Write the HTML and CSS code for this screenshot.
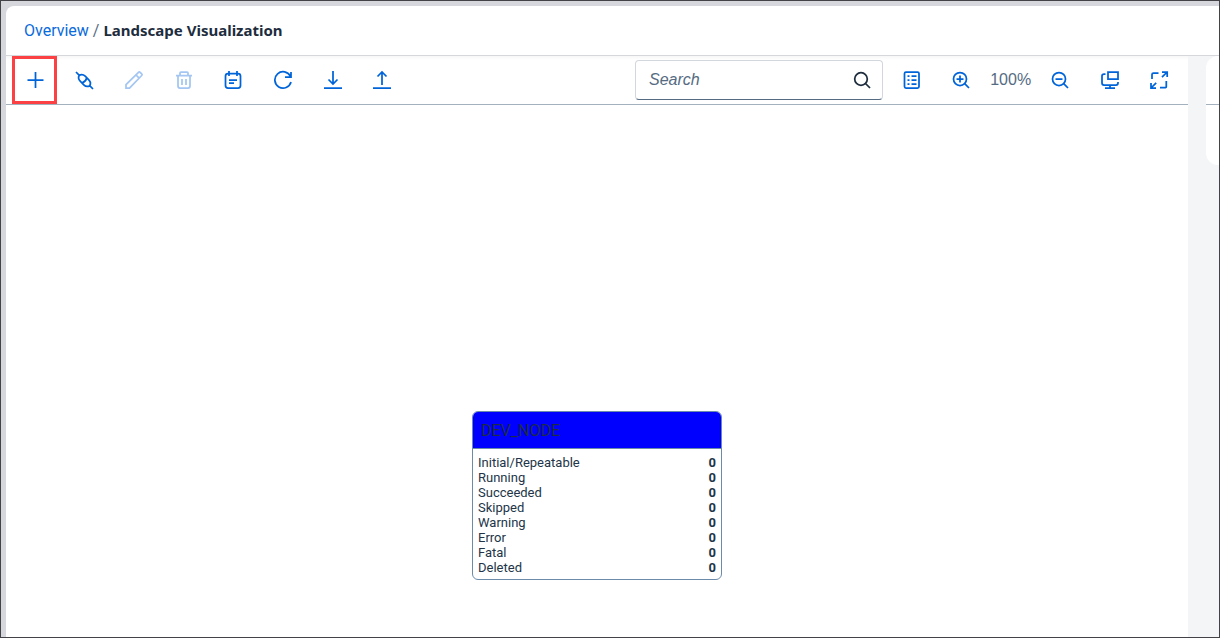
FILE: index.html
```html
<!DOCTYPE html>
<html lang="en">
<head>
<meta charset="utf-8">
<meta name="viewport" content="width=device-width, initial-scale=1">
<title>Landscape Visualization</title>
<link rel="stylesheet" href="styles.css">
</head>
<body>
<div class="shell">
  <header class="header">
    <nav class="breadcrumb" aria-label="Breadcrumb">
      <a class="crumb" href="#">Overview</a>
      <span class="separator">/</span>
      <h1 class="title">Landscape Visualization</h1>
    </nav>
  </header>
  <div class="content">
    <main class="graph">
      <div class="toolbar" role="toolbar" aria-label="Landscape">
        <div class="tools tools-edit">
          <button class="tool highlighted" type="button" aria-label="Add node"><svg class="icon" viewBox="0 0 20 20"><path d="M10.500 2v16M2.500 10h16"/></svg></button>
          <button class="tool" type="button" aria-label="Connect"><svg class="icon" viewBox="0 0 20 20"><path d="M2 2l3.300 3.300M15.700 15.700l3.300 3.300M5.300 5.300C7.500 4 9.500 4.500 11.200 6.200l3.600 3.600C16.500 11.500 17 13.500 15.700 15.700C13.500 17 11.500 16.500 9.800 14.800L6.200 11.200C4.500 9.500 4 7.500 5.300 5.300ZM12.800 7.800Q12 11.500 8.200 12.800"/></svg></button>
          <button class="tool" type="button" aria-label="Edit" disabled><svg class="icon" viewBox="0 0 20 20"><path d="M2 18v-3.500L14.500 2.300q.8-.8 1.600 0l1.600 1.600q.8.800 0 1.600L5.500 18ZM12 5l3.200 3.200"/></svg></button>
          <button class="tool" type="button" aria-label="Delete" disabled><svg class="icon" viewBox="0 0 20 20"><path d="M2 5.500h16M6 5V3q0-1 1-1h6q1 0 1 1v2M4 6v10q0 2 2 2h8q2 0 2-2V6M8 9v6M12 9v6"/></svg></button>
          <button class="tool" type="button" aria-label="Schedule"><svg class="icon" viewBox="0 0 20 20"><path d="M5 3.500h10q2.500 0 2.500 2.500v9.500q0 2.500-2.500 2.500H5q-2.500 0-2.500-2.500V6Q2.500 3.500 5 3.500ZM6 1v5M14 1v5M6 10.200h8M6 13.200h5"/></svg></button>
          <button class="tool" type="button" aria-label="Refresh"><svg class="icon" viewBox="0 0 20 20"><path d="M18 12A8.200 8.200 0 1 1 17.500 6.500M18 2v5h-6"/></svg></button>
          <button class="tool" type="button" aria-label="Download"><svg class="icon" viewBox="0 0 20 20"><path d="M10 1v13M5.500 9.500 10 14l4.500-4.500M1 18.200h18"/></svg></button>
          <button class="tool" type="button" aria-label="Upload"><svg class="icon" viewBox="0 0 20 20"><path d="M10 15V2M5.500 6.500 10 2l4.500 4.500M1 18.200h18"/></svg></button>
        </div>
        <form class="search" role="search">
          <input class="search-input" type="text" placeholder="Search" aria-label="Search">
          <button class="search-button" type="button" aria-label="Search"><svg class="icon" viewBox="0 0 20 20"><circle cx="9" cy="9" r="6.300"/><path d="m13.500 13.500 4.500 4.500"/></svg></button>
        </form>
        <div class="tools tools-view">
          <button class="tool" type="button" aria-label="Legend"><svg class="icon" viewBox="0 0 20 20"><rect x="2.500" y="2" width="14.500" height="16" rx="1.500"/><path d="M5.500 6h2M5.500 10h2M5.500 14h2M9.500 6h5M9.500 10h5M9.500 14h5"/></svg></button>
          <button class="tool" type="button" aria-label="Zoom in"><svg class="icon" viewBox="0 0 20 20"><circle cx="9" cy="9" r="6.500"/><path d="m13.700 13.700 4.300 4.300M5.500 9h7M9 5.500v7"/></svg></button>
          <output class="zoom-level">100%</output>
          <button class="tool" type="button" aria-label="Zoom out"><svg class="icon" viewBox="0 0 20 20"><circle cx="9" cy="9" r="6.500"/><path d="m13.700 13.700 4.300 4.300M5.500 9h7"/></svg></button>
          <button class="tool" type="button" aria-label="Zoom to fit"><svg class="icon" viewBox="0 0 20 20"><path d="M8 2h10v7H8ZM5.500 4H4Q2 4 2 6v7q0 2 2 2h12q2 0 2-2v-1M10 15v3M5 18.200h10"/></svg></button>
          <button class="tool" type="button" aria-label="Full screen"><svg class="icon" viewBox="0 0 20 20"><path d="M9.500 3H4.500Q3 3 3 4.500V9M11 17.500h5.500q.8 0 .8-.8V11M13 2h5.200v5M18.200 2l-5.200 5.200M2 13v5h5M2 18l5.200-5.200"/></svg></button>
        </div>
      </div>
      <div class="canvas">
        <section class="node" aria-label="DEV_NODE">
          <h2 class="node-title">DEV_NODE</h2>
          <table class="stats">
            <tbody>
              <tr><th scope="row">Initial/Repeatable</th><td>0</td></tr>
              <tr><th scope="row">Running</th><td>0</td></tr>
              <tr><th scope="row">Succeeded</th><td>0</td></tr>
              <tr><th scope="row">Skipped</th><td>0</td></tr>
              <tr><th scope="row">Warning</th><td>0</td></tr>
              <tr><th scope="row">Error</th><td>0</td></tr>
              <tr><th scope="row">Fatal</th><td>0</td></tr>
              <tr><th scope="row">Deleted</th><td>0</td></tr>
            </tbody>
          </table>
        </section>
      </div>
    </main>
    <aside class="side"><div class="side-panel"><div class="side-header"></div></div></aside>
  </div>
</div>
</body>
</html>
```
FILE: styles.css
```css
* { box-sizing: border-box; }

body {
  margin: 0;
  color: #223548;
  font: 16px/20px Roboto, "Liberation Sans", sans-serif;
}

.shell {
  display: flex;
  flex-direction: column;
  min-height: 100vh;
  padding: 5px 0 0 5px;
  border: 1px solid #434247;
  background: #d5d7dd;
}

.header {
  display: flex;
  align-items: center;
  height: 50px;
  padding: 0 18px;
  border-bottom: 1px solid #d5d7da;
  border-top-left-radius: 8px;
  background: #fff;
}

.breadcrumb { display: flex; gap: 4px; align-items: baseline; }
.crumb { color: #0a6bdc; text-decoration: none; }
.separator { color: #556b82; }

.title {
  margin: 0;
  color: #1d2d3e;
  font: bold 15px/20px "Noto Sans", sans-serif;
}

.content { display: flex; flex: 1; background: #f4f5f7; }

.graph {
  display: flex;
  flex: 1;
  flex-direction: column;
  min-width: 0;
  background: #fff;
}

.toolbar {
  display: flex;
  align-items: center;
  height: 49px;
  padding: 0 6px;
  border-bottom: 1px solid #a3b0be;
  background: linear-gradient(#f7f7f8, #fff 4px);
}

.tools { display: flex; flex: none; justify-content: space-between; align-items: center; }
.tools-edit { width: 393px; }
.tools-view { width: 293px; margin-left: 6px; }

.tool {
  display: grid;
  place-items: center;
  width: 45px;
  height: 48px;
  padding: 0;
  border: 0;
  background: transparent;
  color: #0064d9;
}

.tool:disabled { color: #a3c6f2; }
.highlighted { border: 3px solid #fc4144; }

.icon {
  width: 20px;
  height: 20px;
  fill: none;
  stroke: currentColor;
  stroke-width: 1.75;
}

.search {
  display: flex;
  width: 248px;
  height: 40px;
  margin-left: auto;
  border: 1px solid #d3d7dd;
  border-bottom-color: #556b82;
  border-radius: 4px;
  background: #fff;
}

.search-input {
  flex: 1;
  min-width: 0;
  padding: 0 13px;
  border: 0;
  background: transparent;
  color: #223548;
  font: italic 16px/20px "Liberation Sans", sans-serif;
}

.search-input::placeholder { color: #556b82; opacity: 1; }

.search-button {
  display: grid;
  place-items: center;
  width: 40px;
  padding: 0;
  border: 0;
  background: transparent;
  color: #1d2d3e;
}

.zoom-level {
  width: 45px;
  color: #556b82;
  font-family: "Liberation Sans", sans-serif;
  text-align: center;
}

.canvas { position: relative; flex: 1; }

.node {
  position: absolute;
  top: 306px;
  left: 466px;
  width: 250px;
  overflow: hidden;
  border: 1px solid #6c8bab;
  border-radius: 6px;
  background: #fff;
}

.node-title {
  margin: 0;
  padding: 9px 8px 7px;
  border-bottom: 1px solid #6c8bab;
  background: #00f;
  color: #1d2d3e;
  font-size: 16px;
  font-weight: normal;
  line-height: 20px;
}

.stats {
  width: 100%;
  margin: 6px 0 4px;
  border-collapse: collapse;
  font-size: 13px;
  line-height: 15px;
}

.stats th, .stats td { padding: 0 5px; }
.stats th { font-weight: normal; text-align: left; }
.stats td { font-weight: bold; text-align: right; }

.side { flex: none; width: 31px; padding-left: 18px; }

.side-panel {
  height: 109px;
  border-radius: 12px 0 0 12px;
  background: #fff;
}

.side-header { height: 49px; border-bottom: 1px solid #a3b0be; }
```
